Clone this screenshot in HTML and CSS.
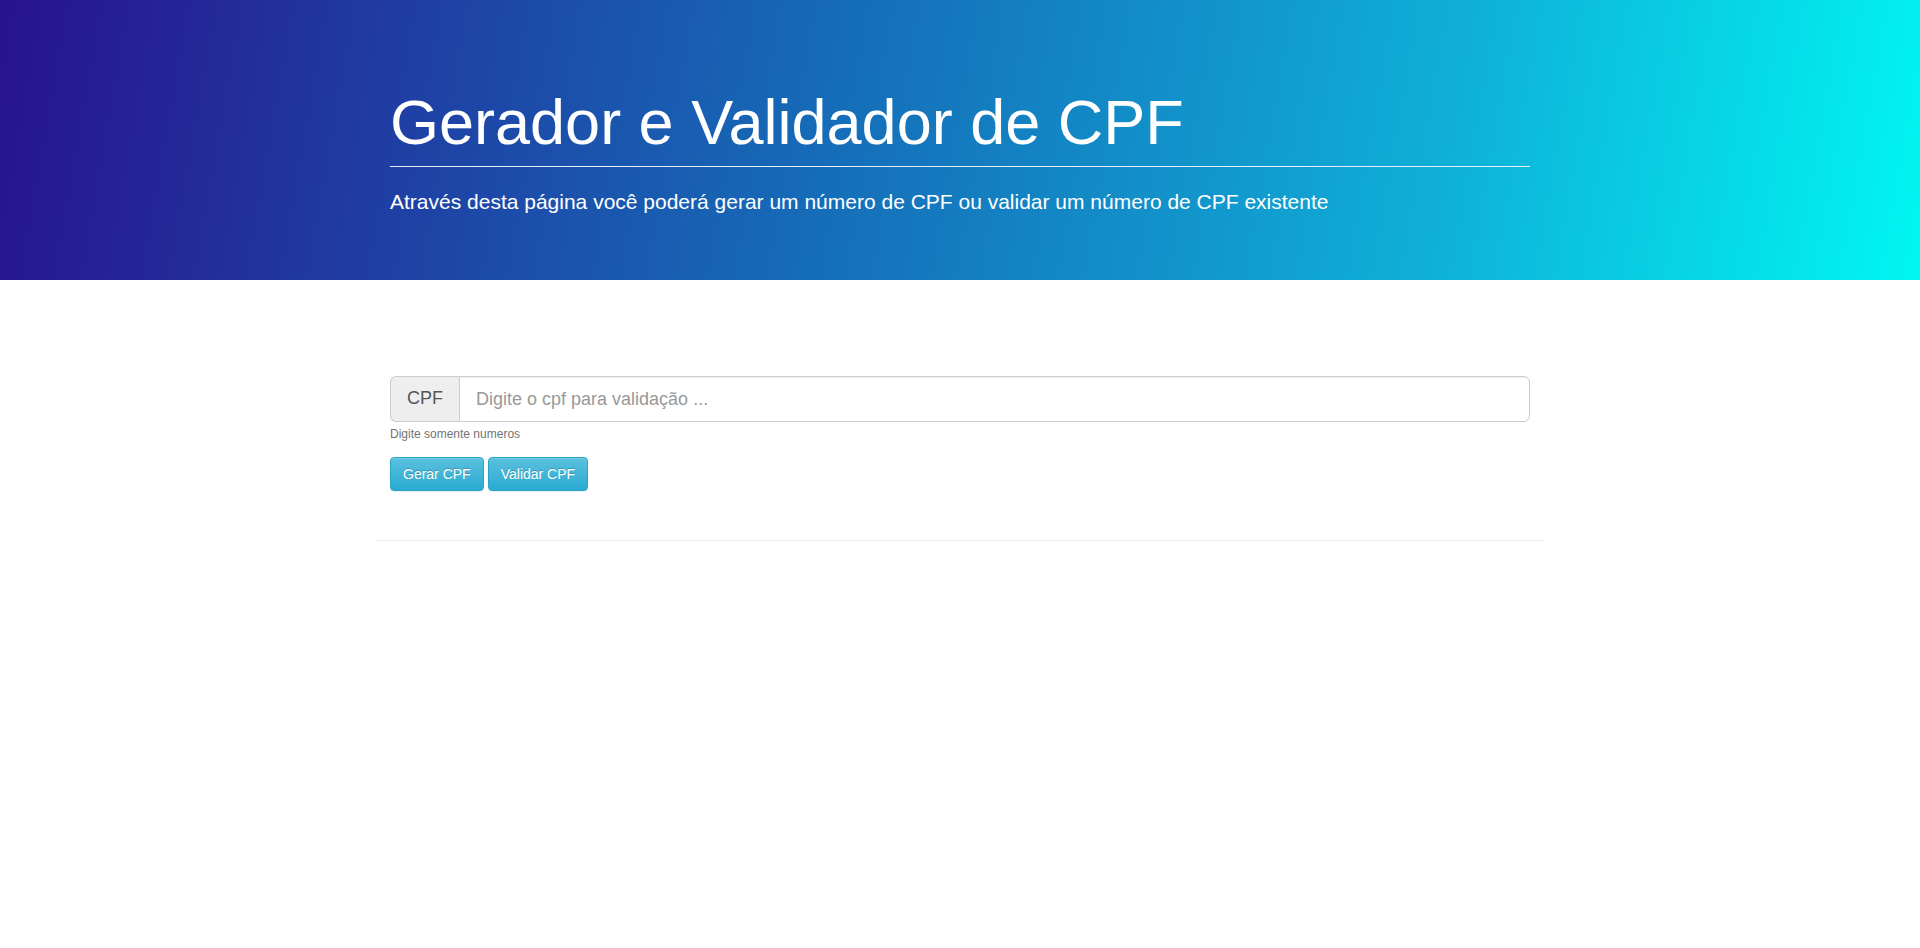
FILE: index.html
```html
<!DOCTYPE html>
<html lang="pt-BR">
<head>
<meta charset="utf-8">
<title>Gerador e Validador de CPF</title>
<link rel="stylesheet" href="styles.css">
</head>
<body>
<header class="jumbotron">
  <div class="container">
    <h1 class="title">Gerador e Validador de CPF</h1>
    <hr class="title-rule">
    <p class="lead">Através desta página você poderá gerar um número de CPF ou validar um número de CPF existente</p>
  </div>
</header>
<main class="container main">
  <div class="form-group">
    <div class="input-group">
      <span class="addon">CPF</span>
      <input class="field" type="text" placeholder="Digite o cpf para validação ...">
    </div>
    <span class="help">Digite somente numeros</span>
  </div>
  <div class="actions">
    <button class="btn" type="button">Gerar CPF</button>
    <button class="btn" type="button">Validar CPF</button>
  </div>
</main>
<div class="divider"></div>
</body>
</html>
```

FILE: styles.css
```css
* { box-sizing: border-box; }
html, body { margin: 0; padding: 0; }
body {
  font-family: "Liberation Sans", Arial, sans-serif;
  font-size: 14px;
  line-height: 1.42857;
  color: #333;
  background: #fff;
}
.container {
  width: 1170px;
  margin: 0 auto;
  padding: 0 15px;
}
.jumbotron {
  height: 280px;
  padding: 48px 0;
  color: #fff;
  background: linear-gradient(100deg, #28128f 0%, #1570ba 45%, #0fb0d8 75%, #00f6f3 100%);
}
.title {
  margin: 40px 0 0;
  font-size: 63px;
  font-weight: 400;
  line-height: 69px;
}
.title-rule {
  margin: 9px 0 20px;
  border: 0;
  border-top: 1px solid #e8eef8;
  height: 0;
}
.lead {
  margin: 0;
  font-size: 21px;
  line-height: 30px;
  font-weight: 400;
}
.main {
  padding-top: 96px;
  padding-bottom: 49px;
}
.input-group {
  display: flex;
  height: 46px;
}
.addon {
  display: flex;
  align-items: center;
  justify-content: center;
  width: 69px;
  font-size: 18px;
  color: #555;
  background: #eee;
  border: 1px solid #ccc;
  border-right: 0;
  border-radius: 6px 0 0 6px;
}
.field {
  flex: 1;
  height: 46px;
  padding: 10px 16px;
  font-family: inherit;
  font-size: 18px;
  color: #555;
  border: 1px solid #ccc;
  border-radius: 0 6px 6px 0;
  box-shadow: inset 0 1px 1px rgba(0,0,0,.075);
  outline: none;
}
.field::placeholder { color: #999; }
.help {
  display: block;
  margin-top: 4px;
  font-size: 12px;
  line-height: 17px;
  color: #737373;
}
.actions {
  display: flex;
  gap: 4px;
  margin-top: 14px;
}
.btn {
  height: 34px;
  padding: 6px 12px;
  font-family: inherit;
  font-size: 14px;
  line-height: 20px;
  color: #fff;
  background: linear-gradient(to bottom, #5bc0de 0%, #2aabd2 100%);
  border: 1px solid #28a4c9;
  border-radius: 4px;
  text-shadow: 0 -1px 0 rgba(0,0,0,.2);
  box-shadow: inset 0 1px 0 rgba(255,255,255,.15), 0 1px 1px rgba(0,0,0,.075);
  cursor: pointer;
}
.divider {
  width: 1170px;
  margin: 0 auto;
  border-top: 1px solid #eee;
}
```
